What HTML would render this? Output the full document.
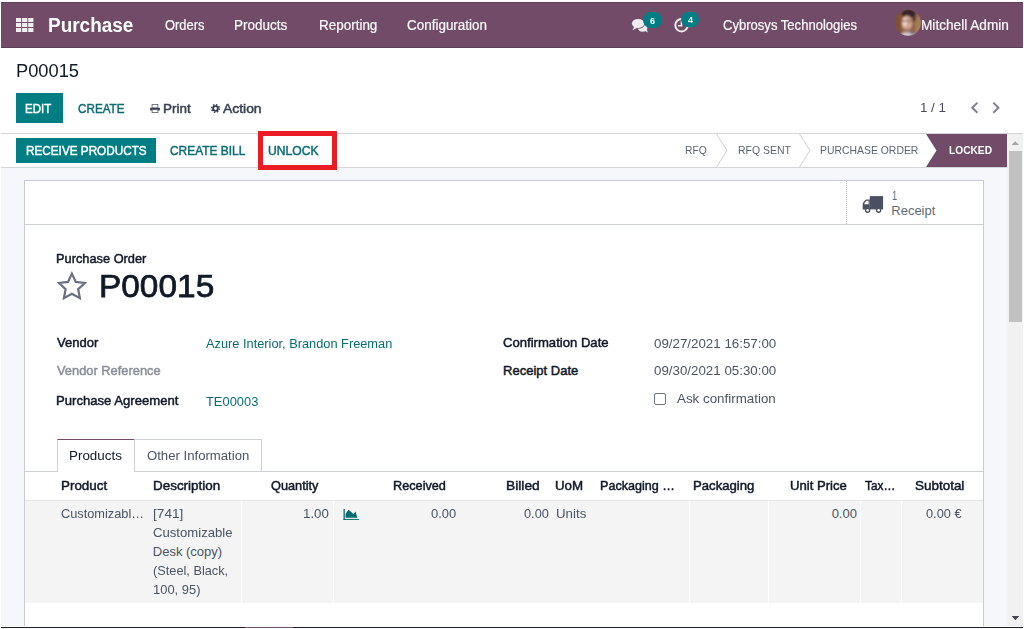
<!DOCTYPE html>
<html lang="en">
<head>
<meta charset="utf-8">
<title>P00015 - Odoo Purchase</title>
<style>
*{box-sizing:border-box}
html,body{margin:0;padding:0;width:1024px;height:629px;overflow:hidden;background:#fff}
body{font-family:"Liberation Sans",sans-serif;position:relative}
.a{position:absolute}
.t{position:absolute;white-space:pre;line-height:normal;transform-origin:0 0}
svg{position:absolute;overflow:visible}
</style>
</head>
<body>
<!-- page background below control panel -->
<div class="a" style="left:1px;top:168px;width:1006px;height:458px;background:#F6F7FA"></div>

<!-- top navbar -->
<div class="a" style="left:1px;top:2px;width:1022px;height:46px;background:#714B67;border-top:1px solid #62405A;border-bottom:1px solid #5E3E56"></div>
<!-- apps grid icon -->
<svg style="left:16px;top:18px" width="18" height="14" viewBox="0 0 18 14"><g fill="#F1EEF1">
<rect x="0" y="0" width="5.2" height="4"/><rect x="6.1" y="0" width="5.2" height="4"/><rect x="12.2" y="0" width="5.2" height="4"/>
<rect x="0" y="5" width="5.2" height="4"/><rect x="6.1" y="5" width="5.2" height="4"/><rect x="12.2" y="5" width="5.2" height="4"/>
<rect x="0" y="10" width="5.2" height="4"/><rect x="6.1" y="10" width="5.2" height="4"/><rect x="12.2" y="10" width="5.2" height="4"/></g></svg>

<!-- control panel separators -->
<div class="a" style="left:1px;top:133px;width:1022px;height:1px;background:#D4D6DC"></div>
<div class="a" style="left:1px;top:167px;width:1006px;height:1px;background:#D4D6DC"></div>

<!-- buttons -->
<div class="a" style="left:16px;top:93px;width:47px;height:30px;background:#017E84"></div>
<div class="a" style="left:16px;top:138px;width:140px;height:25px;background:#017E84"></div>

<!-- status bar: locked -->
<svg style="left:926px;top:134px" width="81" height="33" viewBox="0 0 81 33"><polygon points="0,0 81,0 81,33 0,33 10.5,16.5" fill="#714B67"/></svg>
<svg style="left:700px;top:134px" width="120" height="33" viewBox="0 0 120 33" fill="none" stroke="#CDD0D6" stroke-width="1">
<polyline points="16.5,0 27,16.5 16.5,33"/><polyline points="99.5,0 110,16.5 99.5,33"/></svg>

<!-- red highlight box -->
<div class="a" style="left:258px;top:131px;width:79px;height:39px;border:5px solid #EC1C24"></div>

<!-- scrollbar -->
<div class="a" style="left:1007px;top:134px;width:16px;height:492px;background:#F1F1F1"></div>
<div class="a" style="left:1009px;top:151px;width:13px;height:171px;background:#C1C1C1"></div>
<svg style="left:1007px;top:134px" width="16" height="493" viewBox="0 0 16 493"><polygon points="4.6,11 12,11 8.3,7.2" fill="#A3A3A3"/><polygon points="4.6,482 12.2,482 8.4,486.2" fill="#454552"/></svg>

<!-- form sheet -->
<div class="a" style="left:24px;top:180px;width:960px;height:446px;background:#fff;border:1px solid #C9CCD6;border-bottom:0"></div>
<div class="a" style="left:25px;top:224px;width:958px;height:1px;background:#CED0D8"></div>
<div class="a" style="left:846px;top:181px;width:0;height:43px;border-left:1px dotted #B8BCC6"></div>

<!-- tabs -->
<div class="a" style="left:25px;top:471px;width:958px;height:1px;background:#CDD0D7"></div>
<div class="a" style="left:57px;top:439px;width:78px;height:33px;background:#fff;border:1px solid #CDD0D7;border-bottom:0;border-top:1px solid #714B67"></div>
<div class="a" style="left:134px;top:439px;width:128px;height:33px;border:1px solid #CDD0D7;border-left:0"></div>

<!-- table row -->
<div class="a" style="left:25px;top:501px;width:958px;height:102px;background:#F4F4F4"></div>
<div class="a" style="left:25px;top:500px;width:958px;height:1px;background:#E3E5EA"></div>
<div class="a" style="left:241px;top:501px;width:1px;height:102px;background:#FDFDFD"></div>
<div class="a" style="left:333px;top:501px;width:1px;height:102px;background:#FDFDFD"></div>
<div class="a" style="left:689px;top:501px;width:1px;height:102px;background:#FDFDFD"></div>
<div class="a" style="left:768px;top:501px;width:1px;height:102px;background:#FDFDFD"></div>
<div class="a" style="left:860px;top:501px;width:1px;height:102px;background:#FDFDFD"></div>
<div class="a" style="left:901px;top:501px;width:1px;height:102px;background:#FDFDFD"></div>

<!-- checkbox -->
<div class="a" style="left:654px;top:393px;width:12px;height:12px;border:1px solid #6B7280;border-radius:2px;background:#fff"></div>

<!-- bottom window edge -->
<div class="a" style="left:1px;top:627px;width:1022px;height:1px;background:#1B2030"></div>
<div class="a" style="left:245px;top:627px;width:48px;height:1px;background:#7A4F6E"></div>

<!--ICONS_START-->
<!-- messaging icon + badge -->
<svg style="left:0;top:0" width="1024" height="60" viewBox="0 0 1024 60">
 <g fill="#EFEBEE">
  <ellipse cx="642.6" cy="28.3" rx="4.7" ry="3.5"/>
  <path d="M644.2,30.6 l3.7,1.9 l-1.4,-3.6z"/>
  <ellipse cx="638.1" cy="23.5" rx="6.9" ry="5.2" fill="#714B67"/>
  <path d="M634.6,26 l-2.2,4.2 l5,-2.4z"/>
  <ellipse cx="638.1" cy="23.5" rx="6.2" ry="4.5"/>
 </g>
 <rect x="643" y="11.8" width="19" height="16.4" rx="8.2" fill="#017E84"/>
 <!-- activity clock icon + badge -->
 <circle cx="681.5" cy="25.2" r="6.2" fill="none" stroke="#EFEBEE" stroke-width="2"/>
 <path d="M681.5,21 v4.7 h-3.4" fill="none" stroke="#EFEBEE" stroke-width="1.6"/>
 <rect x="681" y="11.8" width="18" height="15.4" rx="7.7" fill="#017E84"/>
 <!-- avatar -->
 <defs><clipPath id="av"><circle cx="908" cy="22.8" r="13"/></clipPath><filter id="bl" x="-10%" y="-10%" width="120%" height="120%"><feGaussianBlur stdDeviation="0.8"/></filter></defs>
 <g clip-path="url(#av)"><g filter="url(#bl)">
  <rect x="892" y="7" width="32" height="32" fill="#8F6245"/>
  <rect x="892" y="7" width="9" height="32" fill="#7F5034"/>
  <rect x="915" y="17" width="9" height="22" fill="#A47C5C"/>
  <ellipse cx="908.5" cy="13.6" rx="7.2" ry="4.6" fill="#35202A"/>
  <path d="M913.5,13 q2.6,3 2,8 l-2.4,0z" fill="#3A242C"/>
  <ellipse cx="907" cy="23.2" rx="5.2" ry="7.8" fill="#CFA38F"/>
  <ellipse cx="905" cy="21.8" rx="2.2" ry="4.6" fill="#E9D3CC"/>
  <path d="M902.4,20.3 h9.6 v1.3 h-9.6z" fill="#8A665E"/>
  <path d="M903.5,27.6 q3.8,3.4 7.6,0 l0,2.4 q-3.8,3.4 -7.6,0z" fill="#A4766A"/>
  <path d="M900,38 q1,-6.5 7,-5.6 q8,-0.9 9,5.6z" fill="#D6C6CC"/>
  <path d="M909.4,31.6 l2.4,4.4 l1.8,-3.4z" fill="#66779C"/>
 </g></g>
</svg>

<!-- print icon -->
<svg style="left:150px;top:104px" width="10" height="9" viewBox="0 0 10 9">
 <rect x="2.1" y="0.4" width="5.8" height="3.6" fill="#fff" stroke="#555B6E" stroke-width="0.8"/>
 <rect x="0.1" y="3.8" width="9.8" height="2.7" rx="0.6" fill="#3B4154"/>
 <rect x="2.1" y="5.7" width="5.8" height="2.9" fill="#fff" stroke="#555B6E" stroke-width="0.8"/>
</svg>
<!-- gear icon -->
<svg style="left:210.5px;top:103.9px" width="9" height="9" viewBox="-4.7 -4.7 9.4 9.4">
 <circle r="3.9" fill="none" stroke="#374151" stroke-width="1.7" stroke-dasharray="1.55 1.513"/>
 <circle r="2.5" fill="none" stroke="#374151" stroke-width="1.9"/>
</svg>
<!-- pager chevrons -->
<svg style="left:968px;top:100px" width="36" height="16" viewBox="968 100 36 16" fill="none" stroke="#837F8C" stroke-width="2">
 <polyline points="977.4,102.6 972.3,107.7 977.4,112.8"/>
 <polyline points="993.3,102.6 998.4,107.7 993.3,112.8"/>
</svg>
<!-- truck icon (receipt stat button) -->
<svg style="left:860px;top:194px" width="26" height="21" viewBox="860 194 26 21">
 <g fill="#4A5060">
  <rect x="869.8" y="196.1" width="13.3" height="13.3"/>
  <path d="M869.8,199.5 h-3.4 q-0.7,0 -1.2,0.6 l-2.1,2.6 q-0.4,0.5 -0.4,1.2 v5.5 h7.1z"/>
  <circle cx="867.6" cy="210.2" r="2.7"/>
  <circle cx="878.6" cy="210.2" r="2.7"/>
 </g>
 <path d="M868.6,200.8 h-2.2 l-2.1,2.7 v0.7 h4.3z" fill="#fff"/>
 <circle cx="867.6" cy="210.2" r="1.3" fill="#fff"/>
 <circle cx="878.6" cy="210.2" r="1.3" fill="#fff"/>
</svg>
<!-- priority star -->
<svg style="left:50px;top:264px" width="50" height="44" viewBox="50 264 50 44">
 <polygon points="71.90,273.60 75.78,281.86 84.83,283.00 78.18,289.24 79.89,298.20 71.90,293.80 63.91,298.20 65.62,289.24 58.97,283.00 68.02,281.86" fill="none" stroke="#6B7080" stroke-width="2.2" stroke-linejoin="miter"/>
</svg>
<!-- forecast area-chart icon -->
<svg style="left:342px;top:508px" width="18" height="13" viewBox="342 508 18 13" fill="#086A70">
 <rect x="343.5" y="508.9" width="1.3" height="11"/>
 <rect x="343.4" y="518.9" width="15.5" height="1"/>
 <polygon points="345.6,517.8 345.6,513.8 348.6,509.7 353.4,513.9 355.5,511.6 357.3,517.8"/>
</svg>
<!--ICONS_END-->
<nav aria-label="Main navigation">
<span class="t" style="left:47.98px;top:14px;font-size:20px;font-weight:700;color:#fff;transform:scaleX(0.9481);">Purchase</span>
<span class="t" style="left:164.77px;top:17px;font-size:14px;font-weight:400;color:#fbf9fb;transform:scaleX(0.9202);-webkit-text-stroke:0.22px #fbf9fb;">Orders</span>
<span class="t" style="left:234.33px;top:17px;font-size:14px;font-weight:400;color:#fbf9fb;transform:scaleX(0.9628);-webkit-text-stroke:0.22px #fbf9fb;">Products</span>
<span class="t" style="left:319.31px;top:17px;font-size:14px;font-weight:400;color:#fbf9fb;transform:scaleX(0.9611);-webkit-text-stroke:0.22px #fbf9fb;">Reporting</span>
<span class="t" style="left:407.29px;top:17px;font-size:14px;font-weight:400;color:#fbf9fb;transform:scaleX(0.9608);-webkit-text-stroke:0.22px #fbf9fb;">Configuration</span>
<span class="t" style="left:723.00px;top:17px;font-size:14px;font-weight:400;color:#fbf9fb;transform:scaleX(0.9328);-webkit-text-stroke:0.22px #fbf9fb;">Cybrosys Technologies</span>
<span class="t" style="left:921.42px;top:17px;font-size:14px;font-weight:400;color:#fbf9fb;transform:scaleX(0.9739);-webkit-text-stroke:0.22px #fbf9fb;">Mitchell Admin</span>
<span class="t" style="left:650.10px;top:14px;font-size:10px;font-weight:700;color:#fff;transform:scale(0.9,0.97);margin-top:0.7px;">6</span>
<span class="t" style="left:688.20px;top:14px;font-size:10px;font-weight:700;color:#fff;transform:scale(0.9,0.97);margin-top:0.2px;">4</span>
</nav>
<header aria-label="Control panel">
<span class="t" style="left:15.70px;top:61px;font-size:18px;font-weight:400;color:#111827;transform:scaleX(1.0153);">P00015</span>
<span class="t" style="left:25.49px;top:101px;font-size:13px;font-weight:400;color:#fff;transform:scaleX(0.8851);-webkit-text-stroke:0.47px #fff;">EDIT</span>
<span class="t" style="left:78.03px;top:101px;font-size:13px;font-weight:400;color:#086C74;transform:scaleX(0.8989);-webkit-text-stroke:0.47px #086C74;">CREATE</span>
<span class="t" style="left:162.56px;top:101px;font-size:13px;font-weight:400;color:#374151;transform:scaleX(1.0342);-webkit-text-stroke:0.47px #374151;">Print</span>
<span class="t" style="left:223.03px;top:101px;font-size:13px;font-weight:400;color:#374151;transform:scaleX(1.0682);-webkit-text-stroke:0.47px #374151;">Action</span>
<span class="t" style="left:920.38px;top:100px;font-size:13px;font-weight:400;color:#4B4B5C;transform:scaleX(1.0231);">1 / 1</span>
</header>
<section aria-label="Status bar">
<span class="t" style="left:25.90px;top:143px;font-size:13px;font-weight:400;color:#fff;transform:scaleX(0.9032);-webkit-text-stroke:0.47px #fff;">RECEIVE PRODUCTS</span>
<span class="t" style="left:170.01px;top:143px;font-size:13px;font-weight:400;color:#086C74;transform:scaleX(0.9165);-webkit-text-stroke:0.47px #086C74;">CREATE BILL</span>
<span class="t" style="left:268.21px;top:143px;font-size:13px;font-weight:400;color:#086C74;transform:scaleX(0.9342);-webkit-text-stroke:0.47px #086C74;">UNLOCK</span>
<span class="t" style="left:685.16px;top:144px;font-size:11.5px;font-weight:400;color:#5A6573;transform:scaleX(0.8965);">RFQ</span>
<span class="t" style="left:737.63px;top:144px;font-size:11.5px;font-weight:400;color:#5A6573;transform:scaleX(0.9083);">RFQ SENT</span>
<span class="t" style="left:820.15px;top:144px;font-size:11.5px;font-weight:400;color:#5A6573;transform:scaleX(0.9055);">PURCHASE ORDER</span>
<span class="t" style="left:948.62px;top:144px;font-size:11.5px;font-weight:700;color:#fff;transform:scaleX(0.8853);">LOCKED</span>
</section>
<section aria-label="Stat buttons">
<span class="t" style="left:891.99px;top:188px;font-size:13px;font-weight:400;color:#5F6B7A;transform:scaleX(0.72);">1</span>
<span class="t" style="left:891.28px;top:203px;font-size:13px;font-weight:400;color:#5F6B7A;">Receipt</span>
</section>
<section aria-label="Order title">
<span class="t" style="left:55.52px;top:251px;font-size:13px;font-weight:400;color:#111827;transform:scaleX(0.9847);-webkit-text-stroke:0.47px #111827;">Purchase Order</span>
<span class="t" style="left:99.10px;top:268px;font-size:32px;font-weight:400;color:#111827;transform:scaleX(1.0443);-webkit-text-stroke:0.75px #111827;">P00015</span>
</section>
<section aria-label="Order fields">
<span class="t" style="left:56.69px;top:335px;font-size:13px;font-weight:400;color:#111827;transform:scaleX(1.0042);-webkit-text-stroke:0.47px #111827;">Vendor</span>
<span class="t" style="left:206.28px;top:336px;font-size:13px;font-weight:400;color:#086C74;transform:scaleX(0.9838);">Azure Interior, Brandon Freeman</span>
<span class="t" style="left:56.79px;top:363px;font-size:13px;font-weight:400;color:#8A8F98;transform:scaleX(0.9887);-webkit-text-stroke:0.47px #8A8F98;">Vendor Reference</span>
<span class="t" style="left:55.59px;top:393px;font-size:13px;font-weight:400;color:#111827;transform:scaleX(1.0084);-webkit-text-stroke:0.47px #111827;">Purchase Agreement</span>
<span class="t" style="left:206.28px;top:394px;font-size:13px;font-weight:400;color:#086C74;transform:scaleX(0.9911);">TE00003</span>
<span class="t" style="left:503.43px;top:335px;font-size:13px;font-weight:400;color:#111827;transform:scaleX(1.0076);-webkit-text-stroke:0.47px #111827;">Confirmation Date</span>
<span class="t" style="left:653.77px;top:336px;font-size:13px;font-weight:400;color:#4B5563;transform:scaleX(1.0251);">09/27/2021 16:57:00</span>
<span class="t" style="left:503.11px;top:363px;font-size:13px;font-weight:400;color:#111827;-webkit-text-stroke:0.47px #111827;">Receipt Date</span>
<span class="t" style="left:653.77px;top:363px;font-size:13px;font-weight:400;color:#4B5563;transform:scaleX(1.0251);">09/30/2021 05:30:00</span>
<span class="t" style="left:676.50px;top:391px;font-size:13px;font-weight:400;color:#4B5563;transform:scaleX(1.0275);">Ask confirmation</span>
</section>
<section aria-label="Notebook tabs">
<span class="t" style="left:69.26px;top:448px;font-size:13px;font-weight:400;color:#111827;transform:scaleX(1.0300);">Products</span>
<span class="t" style="left:146.63px;top:448px;font-size:13px;font-weight:400;color:#4B5563;transform:scaleX(1.0109);">Other Information</span>
</section>
<section aria-label="Order lines header">
<span class="t" style="left:60.74px;top:478px;font-size:13px;font-weight:400;color:#111827;transform:scaleX(1.0299);-webkit-text-stroke:0.47px #111827;">Product</span>
<span class="t" style="left:152.50px;top:478px;font-size:13px;font-weight:400;color:#111827;transform:scaleX(1.0335);-webkit-text-stroke:0.47px #111827;">Description</span>
<span class="t" style="left:271.12px;top:478px;font-size:13px;font-weight:400;color:#111827;transform:scaleX(0.9803);-webkit-text-stroke:0.47px #111827;">Quantity</span>
<span class="t" style="left:393.38px;top:478px;font-size:13px;font-weight:400;color:#111827;transform:scaleX(0.9767);-webkit-text-stroke:0.47px #111827;">Received</span>
<span class="t" style="left:505.77px;top:478px;font-size:13px;font-weight:400;color:#111827;transform:scaleX(1.0610);-webkit-text-stroke:0.47px #111827;">Billed</span>
<span class="t" style="left:555.27px;top:478px;font-size:13px;font-weight:400;color:#111827;transform:scaleX(1.0243);-webkit-text-stroke:0.47px #111827;">UoM</span>
<span class="t" style="left:600.30px;top:478px;font-size:13px;font-weight:400;color:#111827;transform:scaleX(0.9681);-webkit-text-stroke:0.47px #111827;">Packaging …</span>
<span class="t" style="left:693.06px;top:478px;font-size:13px;font-weight:400;color:#111827;transform:scaleX(1.0117);-webkit-text-stroke:0.47px #111827;">Packaging</span>
<span class="t" style="left:789.89px;top:478px;font-size:13px;font-weight:400;color:#111827;transform:scaleX(1.0078);-webkit-text-stroke:0.47px #111827;">Unit Price</span>
<span class="t" style="left:864.75px;top:478px;font-size:13px;font-weight:400;color:#111827;transform:scaleX(0.9094);-webkit-text-stroke:0.47px #111827;">Tax…</span>
<span class="t" style="left:914.93px;top:478px;font-size:13px;font-weight:400;color:#111827;transform:scaleX(1.0348);-webkit-text-stroke:0.47px #111827;">Subtotal</span>
</section>
<section aria-label="Order line">
<span class="t" style="left:60.85px;top:506px;font-size:13px;font-weight:400;color:#4B5563;transform:scaleX(0.9823);">Customizabl…</span>
<span class="t" style="left:152.92px;top:506px;font-size:13px;font-weight:400;color:#4B5563;transform:scaleX(1.0509);">[741]</span>
<span class="t" style="left:152.78px;top:525px;font-size:13px;font-weight:400;color:#4B5563;transform:scaleX(1.0103);">Customizable</span>
<span class="t" style="left:152.80px;top:544px;font-size:13px;font-weight:400;color:#4B5563;">Desk (copy)</span>
<span class="t" style="left:152.54px;top:563px;font-size:13px;font-weight:400;color:#4B5563;transform:scaleX(0.9809);">(Steel, Black,</span>
<span class="t" style="left:152.94px;top:582px;font-size:13px;font-weight:400;color:#4B5563;transform:scaleX(0.9956);">100, 95)</span>
<span class="t" style="left:303.49px;top:506px;font-size:13px;font-weight:400;color:#4B5563;transform:scaleX(1.0203);">1.00</span>
<span class="t" style="left:431.15px;top:506px;font-size:13px;font-weight:400;color:#4B5563;transform:scaleX(0.9959);">0.00</span>
<span class="t" style="left:523.81px;top:506px;font-size:13px;font-weight:400;color:#4B5563;transform:scaleX(0.9820);">0.00</span>
<span class="t" style="left:555.57px;top:506px;font-size:13px;font-weight:400;color:#4B5563;transform:scaleX(1.0246);">Units</span>
<span class="t" style="left:831.64px;top:506px;font-size:13px;font-weight:400;color:#4B5563;">0.00</span>
<span class="t" style="left:926.29px;top:506px;font-size:13px;font-weight:400;color:#4B5563;transform:scaleX(0.9820);">0.00 €</span>
</section>
</body>
</html>
